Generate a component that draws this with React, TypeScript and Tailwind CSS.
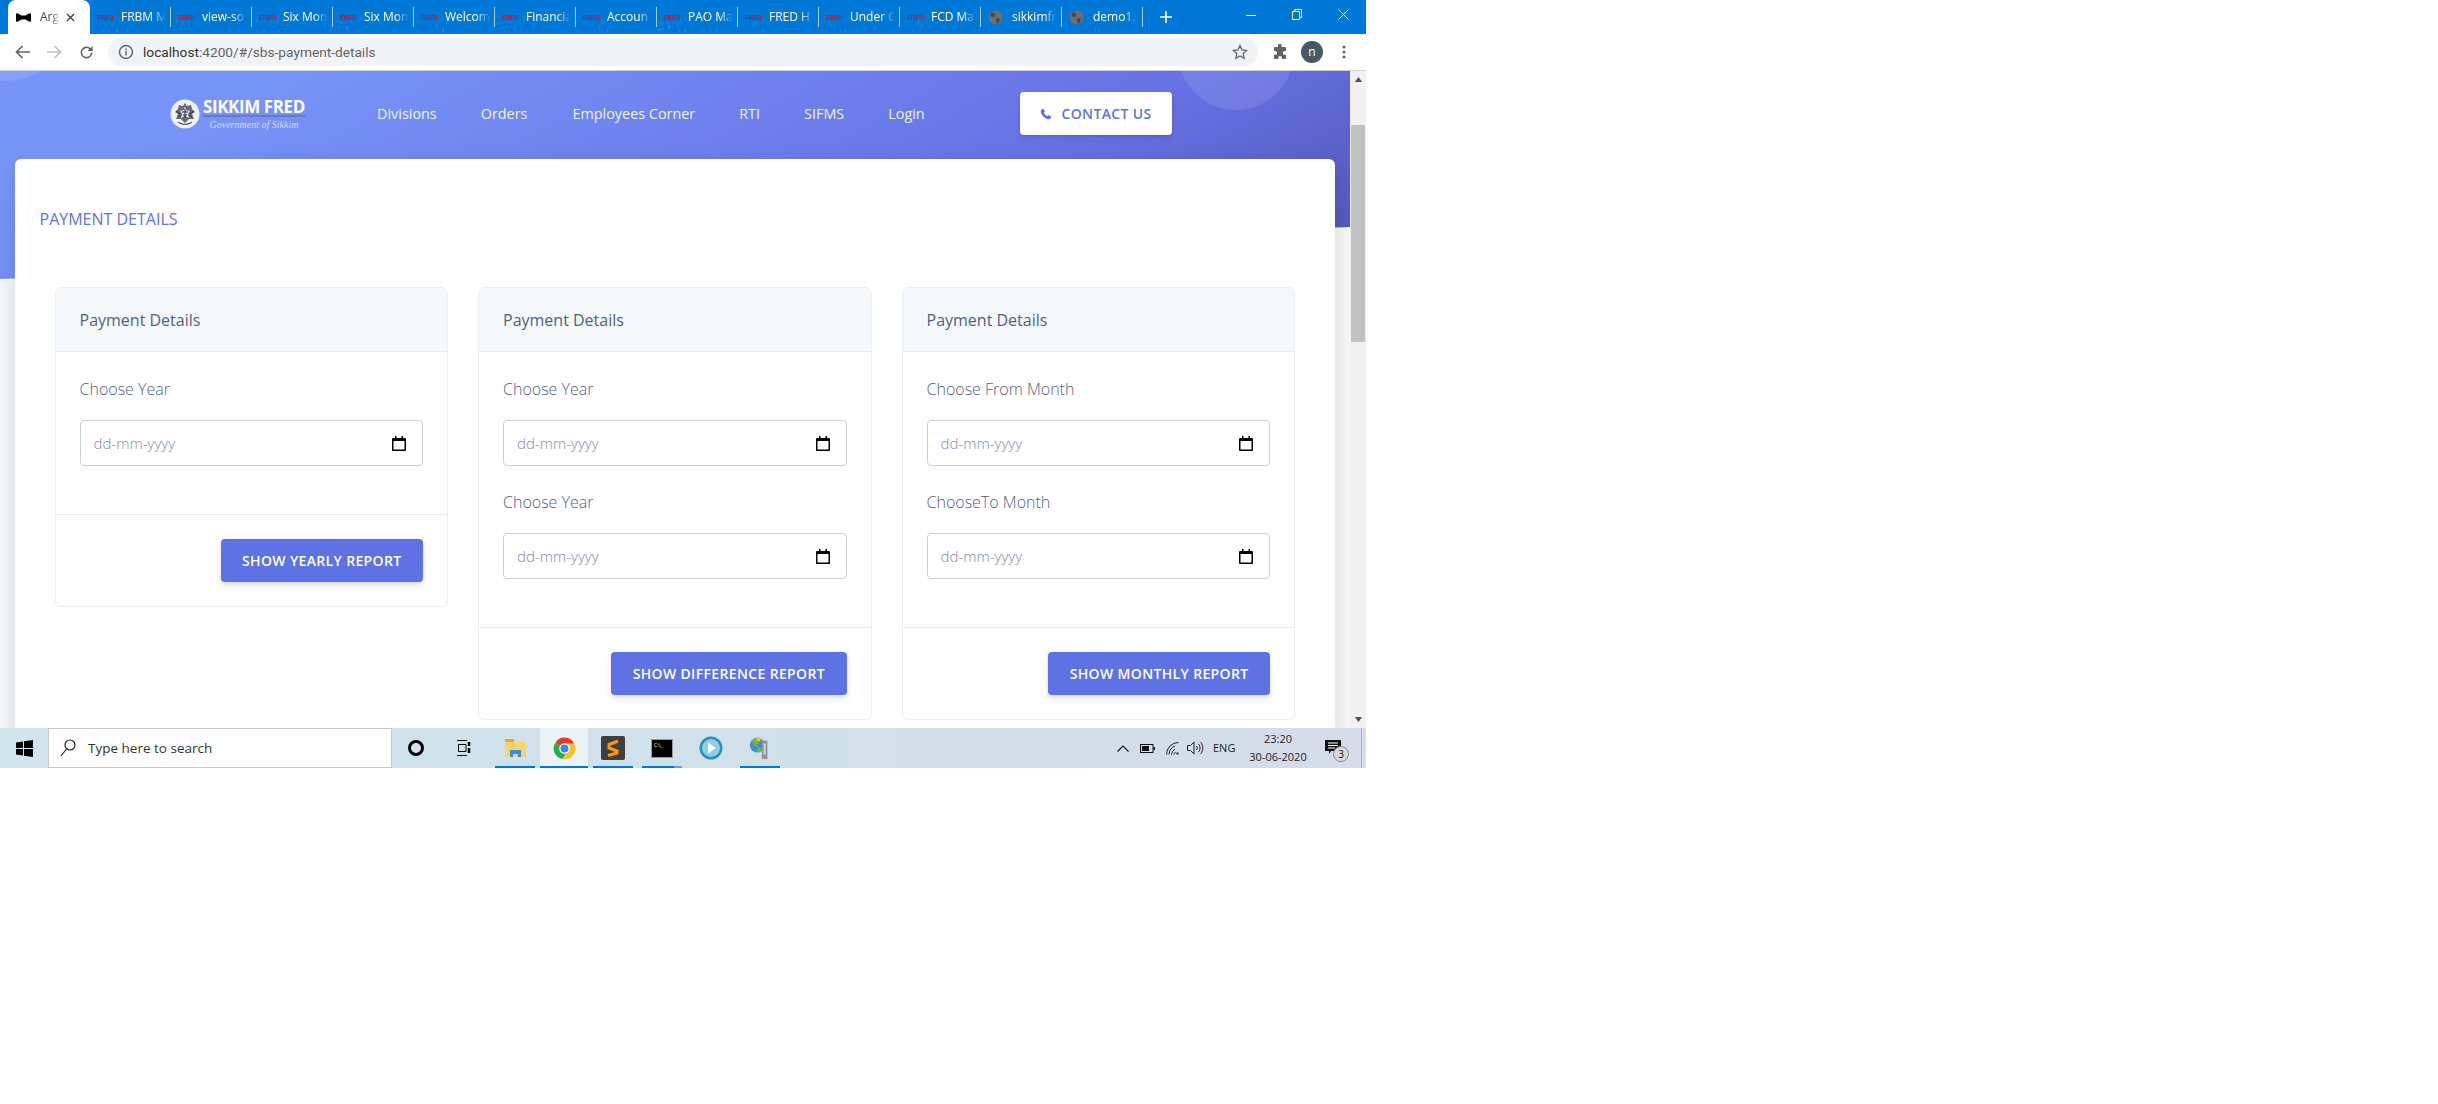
import React from "react";

const tabs = ["FRBM M", "view-so", "Six Mon", "Six Mon", "Welcom", "Financia", "Accoun", "PAO Ma", "FRED H", "Under C", "FCD Ma", "sikkimfr", "demo1."];

function FredMark() {
  return <span className="inline-block w-[16px] shrink-0 origin-left scale-x-85 whitespace-nowrap text-[7px] leading-none font-bold text-[#ff0000] [font-family:'Liberation_Sans',sans-serif]">FRED</span>;
}

function Globe() {
  return (
    <svg width="15" height="15" viewBox="0 0 16 16" className="shrink-0">
      <circle cx="8" cy="8" r="7.5" fill="#6b6f74" />
      <path d="M4 2.5l3 1.5 1 2-2.5 1.500-3-1zM9 8.500l3.500.5-1 4-2 1.500-1-3z" fill="#43474c" />
    </svg>
  );
}

function Tab({ label, index }: { label: string; index: number }) {
  const globe = index > 10;
  return (
    <div className="flex h-full w-[81px] shrink-0 items-center">
      <div className="flex w-[31px] shrink-0 items-center pl-[7px]">
        {globe ? <Globe /> : <FredMark />}
      </div>
      <span className="w-[45px] overflow-hidden whitespace-nowrap text-[12px] leading-4 text-white [mask-image:linear-gradient(to_right,#000_70%,transparent)]">{label}</span>
      <span className="ml-auto h-5 w-px shrink-0 bg-[#a9cfee]" />
    </div>
  );
}

function TabBar() {
  return (
    <div className="flex h-[34px] shrink-0 items-stretch bg-[#0078d7] pl-2">
      <div className="flex h-full w-[82px] shrink-0 items-center rounded-t-lg bg-white pl-2">
        <svg width="15" height="9" viewBox="0 0 15 9" className="shrink-0">
          <path d="M0 1.500C0 .3 1 0 2 .5l3.500 2h4L13 .5c1-.5 2-.2 2 1v6c0 1.200-1 1.500-2 1l-3.500-2h-4L2 8.500c-1 .5-2 .2-2-1z" fill="#000" />
        </svg>
        <span className="ml-[9px] w-[20px] overflow-hidden whitespace-nowrap text-[12px] leading-4 text-[#444] [mask-image:linear-gradient(to_right,#000_60%,transparent)]">Arg</span>
        <svg width="9" height="9" viewBox="0 0 9 9" className="ml-[6px] shrink-0">
          <path d="M1 1l7 7M8 1l-7 7" stroke="#444" strokeWidth="1.400" />
        </svg>
      </div>
      {tabs.map((t, i) => <Tab key={i} label={t} index={i} />)}
      <div className="ml-[16px] flex w-[14px] items-center justify-center">
        <svg width="12" height="12" viewBox="0 0 12 12"><path d="M6 0v12M0 6h12" stroke="#fff" strokeWidth="1.600" /></svg>
      </div>
      <div className="ml-auto flex">
        <div className="flex w-[46px] items-center justify-center pb-[4px]"><span className="h-px w-[10px] bg-white" /></div>
        <div className="flex w-[46px] items-center justify-center pb-[6px]">
          <svg width="10" height="11" viewBox="0 0 10 11" fill="none" stroke="#fff"><path d="M.5 2.500h7v8h-7zM2.500 2.500v-2h7v8h-2" /></svg>
        </div>
        <div className="flex w-[46px] items-center justify-center pb-[6px]">
          <svg width="11" height="11" viewBox="0 0 11 11"><path d="M.5.5l10 10M10.500.5l-10 10" stroke="#fff" /></svg>
        </div>
      </div>
    </div>
  );
}

function ToolCell({ children }: { children: React.ReactNode }) {
  return <div className="flex w-8 items-center justify-center">{children}</div>;
}

function Toolbar() {
  return (
    <div className="flex h-[37px] shrink-0 items-center border-b border-[#cfd1d4] bg-white pl-[6px] pr-[6px]">
      <ToolCell>
        <svg width="15" height="14" viewBox="0 0 15 14" fill="none" stroke="#5f6368" strokeWidth="1.700"><path d="M15 7H2M7.500 1L1.500 7l6 6" /></svg>
      </ToolCell>
      <ToolCell>
        <svg width="15" height="14" viewBox="0 0 15 14" fill="none" stroke="#bdc1c6" strokeWidth="1.700"><path d="M0 7h13M7.500 1l6 6-6 6" /></svg>
      </ToolCell>
      <ToolCell>
        <svg width="15" height="15" viewBox="0 0 16 16" fill="none">
          <path d="M13.500 8a5.500 5.500 0 1 1-1.600-3.900L13.500 5.700" stroke="#5f6368" strokeWidth="1.700" />
          <path d="M14.500 1v5.500H9z" fill="#5f6368" />
        </svg>
      </ToolCell>
      <div className="ml-[6px] flex h-7 flex-1 items-center rounded-full bg-[#f1f3f4] pl-[10px] pr-[10px]">
        <svg width="16" height="16" viewBox="0 0 16 16" fill="none" className="shrink-0">
          <circle cx="8" cy="8" r="6.500" stroke="#5f6368" strokeWidth="1.400" />
          <path d="M8 7v4.500M8 4.500v1.400" stroke="#5f6368" strokeWidth="1.500" />
        </svg>
        <span className="ml-[9px] text-[13.700px] leading-5 text-[#5f6368] [font-family:Roboto,sans-serif]">
          <span className="text-[#333]">localhost</span>:4200/#/sbs-payment-details
        </span>
        <svg width="16" height="16" viewBox="0 0 16 16" fill="none" stroke="#5f6368" strokeWidth="1.300" className="ml-auto shrink-0">
          <path d="M8 1.500l2 4.300 4.700.6-3.500 3.200.9 4.700L8 12l-4.100 2.300.9-4.700-3.500-3.200 4.700-.6z" />
        </svg>
      </div>
      <div className="ml-[6px] flex">
        <ToolCell>
          <svg width="16" height="16" viewBox="0 0 16 16" fill="#5f6368">
            <path d="M6 1.500a1.800 1.800 0 0 1 3.600 0V3H13a1 1 0 0 1 1 1v3h-1.300a1.900 1.900 0 0 0 0 3.800H14V14a1 1 0 0 1-1 1h-3v-1.200a1.900 1.900 0 0 0-3.800 0V15H3a1 1 0 0 1-1-1v-3.300h1.200a1.900 1.900 0 0 0 0-3.800H2V4a1 1 0 0 1 1-1h3z" />
          </svg>
        </ToolCell>
        <ToolCell>
          <div className="flex h-[22px] w-[22px] items-center justify-center rounded-full bg-[#455a64] text-[12px] leading-none text-white">n</div>
        </ToolCell>
        <ToolCell>
          <svg width="4" height="14" viewBox="0 0 4 14" fill="#5f6368"><circle cx="2" cy="2" r="1.500" /><circle cx="2" cy="7" r="1.500" /><circle cx="2" cy="12" r="1.500" /></svg>
        </ToolCell>
      </div>
    </div>
  );
}

function Logo() {
  return (
    <div className="flex w-[136px] items-center">
      <svg width="30" height="30" viewBox="0 0 30 30" className="shrink-0">
        <circle cx="15" cy="15" r="14.500" fill="#eef0f6" />
        <path d="M15 4l2 3 4-1 1 4 3 3-3 2 2 5-5 0-4 4-4-4-5 0 2-5-3-2 3-3 1-4 4 1z" fill="#6a6b76" />
        <path d="M15 7l1 4 4 1-2 3 1 4-4-2-4 2 1-4-2-3 4-1z" fill="#dfe0e6" />
        <path d="M6 12l4 3M24 12l-4 3M8 18l3-2M22 18l-3-2M12 13h6M13 16h4M15 10v9M8 23c3 3 11 3 14 0" stroke="#2f2f38" strokeWidth="1" fill="none" />
      </svg>
      <div className="ml-[3px] flex flex-col items-center">
        <span className="whitespace-nowrap border-b-2 border-[#6f79b5] text-[17px] font-bold leading-[17px] tracking-[-0.4px] text-white">SIKKIM FRED</span>
        <span className="mt-[2px] whitespace-nowrap text-[10px] italic leading-[11px] text-[#d5dcfb] [font-family:'Liberation_Serif',serif]">Government of Sikkim</span>
      </div>
    </div>
  );
}

function NavBar() {
  return (
    <div className="relative flex h-[88px] items-start pl-[170px] pr-[178px] pt-[21px]">
      <div className="flex h-[43px] items-center"><Logo /></div>
      <div className="ml-[71px] flex h-[43px] items-center text-[14.400px] leading-5 text-[#f1f3fd]">
        <span>Divisions</span>
        <span className="ml-[44px]">Orders</span>
        <span className="ml-[45px]">Employees Corner</span>
        <span className="ml-[44px]">RTI</span>
        <span className="ml-[44px]">SIFMS</span>
        <span className="ml-[44px]">Login</span>
      </div>
      <button className="ml-auto flex h-[43px] w-[152px] items-center justify-center rounded bg-white text-[14px] font-semibold leading-5 tracking-[0.35px] text-[#5e72e4] shadow-[0_4px_6px_rgba(50,50,93,0.11),0_1px_3px_rgba(0,0,0,0.08)]">
        <svg width="12" height="12" viewBox="0 0 24 24" fill="#5e72e4" className="mr-[9px]">
          <path d="M6.600 1.500l3.300 5.700-2.200 2.300c1.200 2.800 3.900 5.600 6.800 6.800l2.300-2.200 5.700 3.300c-.4 2.200-2.300 5.100-4.700 5.100C9.500 22.500 1.500 13.300 1.500 6.200c0-2.400 2.900-4.300 5.100-4.700z" />
        </svg>
        CONTACT US
      </button>
    </div>
  );
}

function DateField() {
  return (
    <div className="flex h-[46px] items-center rounded border border-[#cad1d7] bg-white pl-[13px] pr-[16px]">
      <span className="text-[15px] font-light leading-5 text-[#7f8ea3]">dd-mm-yyyy</span>
      <svg width="14" height="15" viewBox="0 0 14 15" className="ml-auto shrink-0">
        <path d="M3 0h1.500v2h5V0H11v2h2a1 1 0 0 1 1 1v11a1 1 0 0 1-1 1H1a1 1 0 0 1-1-1V3a1 1 0 0 1 1-1h2zM1.500 5v8.500h11V5z" fill="#000" />
      </svg>
    </div>
  );
}

function Field({ label }: { label: string }) {
  return (
    <div className="mb-6">
      <div className="mb-[19px] h-6 text-[16px] font-light leading-6 text-[#525f7f]">{label}</div>
      <DateField />
    </div>
  );
}

function Panel({ labels, action }: { labels: string[]; action: string }) {
  return (
    <div className="overflow-hidden rounded-md border border-[#edf0f3] bg-white">
      <div className="flex h-[64px] items-center border-b border-[#e6ebf0] bg-[#f6f9fc] px-6 text-[16px] leading-6 text-[#525f7f]">Payment Details</div>
      <div className="px-6 pb-6 pt-[25px]">
        {labels.map((l, i) => <Field key={i} label={l} />)}
      </div>
      <div className="flex justify-end border-t border-[#e9ecef] p-6">
        <button className="h-[43px] rounded bg-[#5e72e4] px-[21.500px] text-[14px] font-semibold uppercase leading-5 tracking-[0.35px] text-white shadow-[0_4px_6px_rgba(50,50,93,0.11),0_1px_3px_rgba(0,0,0,0.08)]">{action}</button>
      </div>
    </div>
  );
}

function PageContent() {
  return (
    <div className="relative flex-1 overflow-hidden bg-[#f8f9fa]">
      <div className="absolute left-0 top-0 h-[208px] w-full overflow-hidden bg-[linear-gradient(150deg,#7795f8_15%,#6772e5_70%,#555abf_94%)] [clip-path:polygon(0_0,100%_0,100%_156px,0_208px)]">
        <div className="absolute left-[-70px] top-[-140px] h-[150px] w-[150px] rounded-full bg-white/10" />
        <div className="absolute left-[1178px] top-[-77px] h-[116px] w-[116px] rounded-full bg-white/10" />
      </div>
      <NavBar />
      <div className="relative mx-[15px] h-[700px] rounded-md bg-white pl-[39.500px] pr-[40px] pt-12 shadow-[0_15px_35px_rgba(50,50,93,0.1),0_5px_15px_rgba(0,0,0,0.07)]">
        <div className="-ml-[15px] text-[16px] leading-6 text-[#5e72e4]">PAYMENT DETAILS</div>
        <div className="mt-[56px] grid grid-cols-3 items-start gap-[30px]">
          <Panel labels={["Choose Year"]} action="Show Yearly Report" />
          <Panel labels={["Choose Year", "Choose Year"]} action="Show Difference Report" />
          <Panel labels={["Choose From Month", "ChooseTo Month"]} action="Show Monthly Report" />
        </div>
      </div>
    </div>
  );
}

function Scrollbar() {
  return (
    <div className="flex w-4 shrink-0 flex-col items-center bg-[#f1f1f1]">
      <div className="flex h-[17px] w-full shrink-0 items-center justify-center">
        <svg width="7" height="5" viewBox="0 0 7 5"><path d="M3.500 0L7 5H0z" fill="#505050" /></svg>
      </div>
      <div className="mt-[37px] h-[217px] w-[14px] shrink-0 bg-[#c1c1c1]" />
      <div className="mt-auto flex h-[17px] w-full shrink-0 items-center justify-center">
        <svg width="7" height="5" viewBox="0 0 7 5"><path d="M3.500 5L7 0H0z" fill="#505050" /></svg>
      </div>
    </div>
  );
}

function TaskCell({ children, line, active, extra }: { children: React.ReactNode; line?: string; active?: boolean; extra?: string }) {
  return (
    <div className={`relative flex h-full w-[48px] shrink-0 items-center justify-center ${active ? "bg-white/60" : ""}`}>
      {children}
      {line && <span className={`absolute bottom-0 h-[2px] bg-[#0078d7] ${line}`} />}
      {extra && <span className={`absolute bottom-0 h-[2px] bg-[#5aa5e6] ${extra}`} />}
    </div>
  );
}

function Taskbar() {
  return (
    <div className="flex h-10 shrink-0 items-center bg-[linear-gradient(90deg,#cfe5ee,#d0e1ea_55%,#d5dcea)]">
      <div className="flex h-full w-[48px] shrink-0 items-center justify-center">
        <svg width="17" height="17" viewBox="0 0 17 17" fill="#000"><path d="M0 2.500l7-1v6.500H0zM8 1.300L17 0v8H8zM0 9h7v6.500l-7-1zM8 9h9v8l-9-1.300z" /></svg>
      </div>
      <div className="flex h-full w-[344px] shrink-0 items-center border border-[#c9c9c9] bg-white pl-[11px]">
        <svg width="16" height="18" viewBox="0 0 16 18" fill="none" stroke="#222" strokeWidth="1.200" className="shrink-0">
          <circle cx="10" cy="6" r="5" />
          <path d="M6.500 10L1 17" />
        </svg>
        <span className="ml-[12px] text-[13.500px] leading-5 text-[#333]">Type here to search</span>
      </div>
      <TaskCell>
        <span className="h-[16px] w-[16px] rounded-full border-[3px] border-black" />
      </TaskCell>
      <TaskCell>
        <svg width="16" height="16" viewBox="0 0 16 16" fill="none" stroke="#000"><path d="M1 .5h10M1 15.500h10M2.500 4.500h7.500v7h-7.500z" /><path d="M13 2v4M13 8v5" strokeWidth="2.500" /></svg>
      </TaskCell>
      <div className="w-[3px] shrink-0" />
      <TaskCell line="left-[4px] w-[40px]">
        <svg width="21" height="18" viewBox="0 0 21 18">
          <path d="M0 0h8l2 3h11v15H0z" fill="#fcd36a" />
          <path d="M0 0h9v3H0z" fill="#e9a825" />
          <path d="M5 18v-7h11v7h-3v-3H8v3z" fill="#2f8fe0" />
        </svg>
      </TaskCell>
      <div className="w-px shrink-0" />
      <TaskCell active line="left-0 w-full">
        <svg width="23" height="23" viewBox="0 0 24 24">
          <path d="M12 12L2.500 6A11 11 0 0 1 22 7H12z" fill="#e33b2e" />
          <path d="M12 12l-9.500-6A11 11 0 0 0 10 23l5-8z" fill="#2fa84f" />
          <path d="M12 7h10a11 11 0 0 1-12 16l5-8a5 5 0 0 0-3-8z" fill="#fbc02d" />
          <circle cx="12" cy="12" r="5.500" fill="#fff" />
          <circle cx="12" cy="12" r="4.200" fill="#4285f4" />
        </svg>
      </TaskCell>
      <div className="w-px shrink-0" />
      <TaskCell line="left-[4px] w-[40px]">
        <div className="flex h-[24px] w-[24px] items-center justify-center rounded-[2px] bg-[#3f3f3f]">
          <svg width="12" height="18" viewBox="0 0 12 18" fill="none" stroke="#ff9800" strokeWidth="3"><path d="M11 2L2 5.500v3.500l8 3v2L1 16.500" /></svg>
        </div>
      </TaskCell>
      <div className="w-px shrink-0" />
      <TaskCell line="left-[4px] w-[32px]" extra="left-[36px] w-[8px]">
        <div className="h-[19px] w-[22px] border border-[#9a9a9a] bg-black pl-[2px] pt-[2px] text-[5px] leading-[6px] text-white">C:\_</div>
      </TaskCell>
      <div className="w-px shrink-0" />
      <TaskCell>
        <svg width="24" height="24" viewBox="0 0 24 24">
          <circle cx="12" cy="12" r="11.500" fill="#2f8fb8" />
          <circle cx="12" cy="12" r="9" fill="#8fcfe6" />
          <path d="M9 6.500l8 5.500-8 5.500z" fill="#fff" />
        </svg>
      </TaskCell>
      <div className="w-px shrink-0" />
      <TaskCell line="left-[4px] w-[40px]">
        <svg width="24" height="24" viewBox="0 0 24 26">
          <circle cx="9" cy="10" r="8" fill="#3d8fd0" />
          <path d="M3 5l6-3 2 5-4 5zM9 12l5 1-2 5-3-1z" fill="#78b63c" />
          <path d="M8 1l5 2-1 3-4-1z" fill="#f2c230" />
          <rect x="14" y="5" width="6" height="20" fill="#8e959b" />
          <rect x="16" y="8" width="2" height="12" fill="#d7dbde" />
        </svg>
      </TaskCell>
      <div className="flex-1" />
      <div className="flex w-6 shrink-0 justify-center">
        <svg width="12" height="7" viewBox="0 0 12 7" fill="none" stroke="#111" strokeWidth="1.200"><path d="M.5 6.500L6 1l5.500 5.500" /></svg>
      </div>
      <div className="flex w-[25px] shrink-0 justify-center">
        <svg width="15" height="9" viewBox="0 0 15 9"><rect x=".5" y=".5" width="12.500" height="8" fill="none" stroke="#111" /><rect x="2" y="2" width="7" height="5" fill="#111" /><rect x="13.500" y="3" width="1.500" height="3" fill="#111" /></svg>
      </div>
      <div className="flex w-6 shrink-0 justify-center">
        <svg width="13" height="13" viewBox="0 0 13 13" fill="none" stroke="#222"><path d="M.5 12.500A12 12 0 0 1 12.500.5M3 12.500A9.500 9.500 0 0 1 9 4M5.500 12.500A7 7 0 0 1 9 7M8 12.500A4.500 4.500 0 0 1 9.500 10" /><rect x="10.500" y="10.500" width="2" height="2" fill="#222" stroke="none" /></svg>
      </div>
      <div className="flex w-[22px] shrink-0 justify-center">
        <svg width="17" height="14" viewBox="0 0 17 14" fill="none" stroke="#222"><path d="M.5 4.500h3L7 1v12L3.500 9.500h-3zM9.500 5c1 1 1 3 0 4M11.500 3c2 2 2 6 0 8M13.500 1c3 3 3 9 0 12" /></svg>
      </div>
      <span className="ml-[7px] w-[23px] shrink-0 whitespace-nowrap text-[11px] leading-4 text-[#222]">ENG</span>
      <div className="flex w-[84px] shrink-0 flex-col items-center text-[11px] leading-[18px] text-[#222]">
        <span>23:20</span>
        <span>30-06-2020</span>
      </div>
      <div className="relative flex h-full w-[26px] shrink-0 items-center justify-center">
        <svg width="16" height="15" viewBox="0 0 16 15" fill="#111" className="mb-[2px]"><path d="M0 0h16v11H6l-2 3v-3H0z" /><path d="M3 3h10M3 5.500h10M3 8h7" stroke="#fff" /></svg>
        <span className="absolute left-[13px] top-[18px] flex h-4 w-4 items-center justify-center rounded-full border border-[#8a8a8a] bg-[#d8d8d8] text-[10px] leading-none text-[#111]">3</span>
      </div>
      <span className="ml-[15px] h-full w-px shrink-0 bg-[#a8b2c0]" />
      <span className="w-1 shrink-0" />
    </div>
  );
}

export default function App() {
  return (
    <div className="h-[1104px] w-full overflow-hidden bg-white [font-family:'Open_Sans',sans-serif]">
      <div className="flex h-[768px] w-[1366px] flex-col overflow-hidden">
        <TabBar />
        <Toolbar />
        <div className="flex min-h-0 flex-1">
          <PageContent />
          <Scrollbar />
        </div>
        <Taskbar />
      </div>
    </div>
  );
}
